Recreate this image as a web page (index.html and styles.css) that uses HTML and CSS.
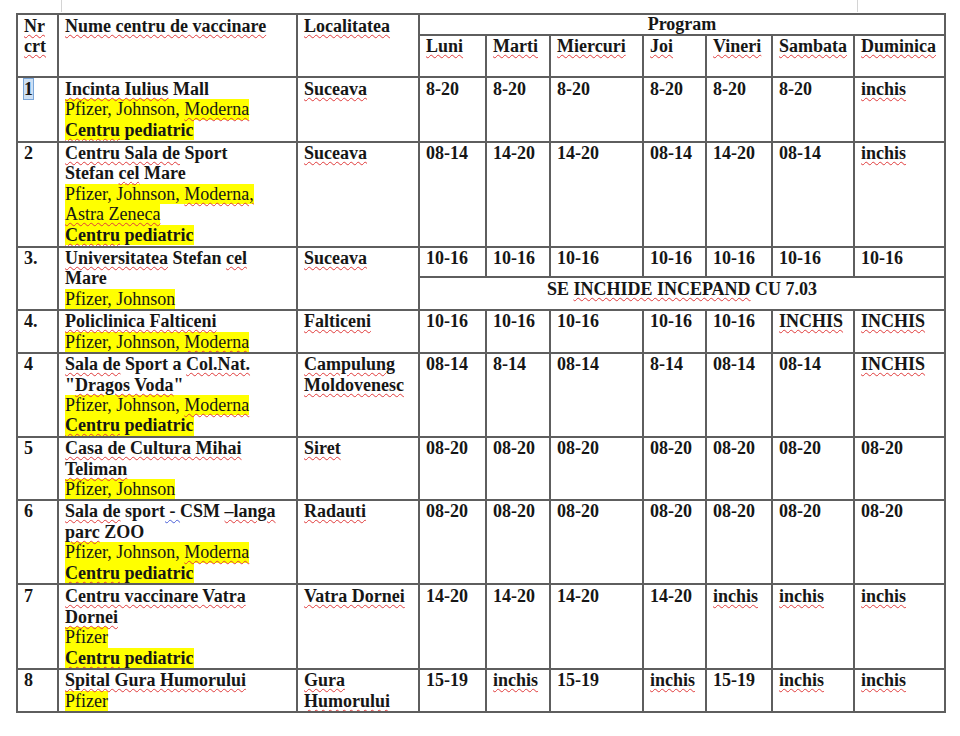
FILE: index.html
```html
<!DOCTYPE html>
<html lang="ro">
<head>
<meta charset="utf-8">
<title>Program centre de vaccinare</title>
<link rel="stylesheet" href="styles.css">
</head>
<body>
<div class="marks"><div class="mark l"></div><div class="mark r"></div></div>
<table class="sched">
  <colgroup>
    <col class="c-nr"><col class="c-name"><col class="c-loc">
    <col class="c-luni"><col class="c-marti"><col class="c-mie"><col class="c-joi"><col class="c-vin"><col class="c-sam"><col class="c-dum">
  </colgroup>
  <tr class="h1">
    <td rowspan="2" class="pt"><div><span class="sp">Nr</span></div><div><span class="sp">crt</span></div></td>
    <td rowspan="2" class="pt"><span class="sp">Nume centru de vaccinare</span></td>
    <td rowspan="2" class="pt"><span class="sp">Localitatea</span></td>
    <td colspan="7" class="center prog">Program</td>
  </tr>
  <tr class="h2">
    <td><span class="sp">Luni</span></td>
    <td><span class="sp">Marti</span></td>
    <td><span class="sp">Miercuri</span></td>
    <td><span class="sp">Joi</span></td>
    <td><span class="sp">Vineri</span></td>
    <td><span class="sp">Sambata</span></td>
    <td><span class="sp">Duminica</span></td>
  </tr>

  <tr class="r1">
    <td class="pt"><span class="sel">1</span></td>
    <td class="pt">
      <div class="ln"><span class="sp">Incinta Iulius</span> Mall</div>
      <div class="ln hl vac">Pfizer, Johnson, <span class="sp">Moderna</span></div>
      <div class="ln hl"><span class="sp">Centru</span> pediatric</div>
    </td>
    <td class="pt"><span class="sp">Suceava</span></td>
    <td class="pt">8-20</td><td class="pt">8-20</td><td class="pt">8-20</td><td class="pt">8-20</td><td class="pt">8-20</td><td class="pt">8-20</td>
    <td class="pt"><span class="sp">inchis</span></td>
  </tr>

  <tr class="r2">
    <td>2</td>
    <td>
      <div class="ln"><span class="sp">Centru Sala de</span> Sport</div>
      <div class="ln">Stefan <span class="sp">cel</span> Mare</div>
      <div class="ln hl vac">Pfizer, Johnson, <span class="sp">Moderna,</span></div>
      <div class="ln hl vac"><span class="sp">Astra Zeneca</span></div>
      <div class="ln hl"><span class="sp">Centru</span> pediatric</div>
    </td>
    <td><span class="sp">Suceava</span></td>
    <td>08-14</td><td>14-20</td><td>14-20</td><td>08-14</td><td>14-20</td><td>08-14</td>
    <td><span class="sp">inchis</span></td>
  </tr>

  <tr class="r3a">
    <td rowspan="2">3.</td>
    <td rowspan="2">
      <div class="ln"><span class="sp">Universitatea</span> Stefan <span class="sp">cel</span></div>
      <div class="ln">Mare</div>
      <div class="ln hl vac">Pfizer, Johnson</div>
    </td>
    <td rowspan="2"><span class="sp">Suceava</span></td>
    <td>10-16</td><td>10-16</td><td>10-16</td><td>10-16</td><td>10-16</td><td>10-16</td><td>10-16</td>
  </tr>
  <tr class="r3b">
    <td colspan="7" class="center pt">SE <span class="sp">INCHIDE INCEPAND</span> CU 7.03</td>
  </tr>

  <tr class="r4">
    <td>4.</td>
    <td>
      <div class="ln"><span class="sp">Policlinica Falticeni</span></div>
      <div class="ln hl vac">Pfizer, Johnson, <span class="sp">Moderna</span></div>
    </td>
    <td><span class="sp">Falticeni</span></td>
    <td>10-16</td><td>10-16</td><td>10-16</td><td>10-16</td><td>10-16</td>
    <td><span class="sp">INCHIS</span></td>
    <td><span class="sp">INCHIS</span></td>
  </tr>

  <tr class="r4b">
    <td>4</td>
    <td>
      <div class="ln"><span class="sp">Sala de</span> Sport a <span class="sp">Col.Nat.</span></div>
      <div class="ln">"<span class="sp">Dragos Voda</span>"</div>
      <div class="ln hl vac">Pfizer, Johnson, <span class="sp">Moderna</span></div>
      <div class="ln hl"><span class="sp">Centru</span> pediatric</div>
    </td>
    <td>
      <div class="ln"><span class="sp">Campulung</span></div>
      <div class="ln"><span class="sp">Moldovenesc</span></div>
    </td>
    <td>08-14</td><td>8-14</td><td>08-14</td><td>8-14</td><td>08-14</td><td>08-14</td>
    <td><span class="sp">INCHIS</span></td>
  </tr>

  <tr class="r5">
    <td>5</td>
    <td>
      <div class="ln"><span class="sp">Casa de Cultura Mihai</span></div>
      <div class="ln"><span class="sp">Teliman</span></div>
      <div class="ln hl vac">Pfizer, Johnson</div>
    </td>
    <td><span class="sp">Siret</span></td>
    <td>08-20</td><td>08-20</td><td>08-20</td><td>08-20</td><td>08-20</td><td>08-20</td><td>08-20</td>
  </tr>

  <tr class="r6">
    <td>6</td>
    <td>
      <div class="ln"><span class="sp">Sala de</span> sport<span class="gr"> - </span>CSM <span class="sp">–langa</span></div>
      <div class="ln"><span class="sp">parc</span> ZOO</div>
      <div class="ln hl vac">Pfizer, Johnson, <span class="sp">Moderna</span></div>
      <div class="ln hl"><span class="sp">Centru</span> pediatric</div>
    </td>
    <td><span class="sp">Radauti</span></td>
    <td>08-20</td><td>08-20</td><td>08-20</td><td>08-20</td><td>08-20</td><td>08-20</td><td>08-20</td>
  </tr>

  <tr class="r7">
    <td class="pt">7</td>
    <td class="pt">
      <div class="ln"><span class="sp">Centru vaccinare Vatra</span></div>
      <div class="ln"><span class="sp">Dornei</span></div>
      <div class="ln hl vac">Pfizer</div>
      <div class="ln hl"><span class="sp">Centru</span> pediatric</div>
    </td>
    <td class="pt"><span class="sp">Vatra Dornei</span></td>
    <td class="pt">14-20</td><td class="pt">14-20</td><td class="pt">14-20</td><td class="pt">14-20</td>
    <td class="pt"><span class="sp">inchis</span></td>
    <td class="pt"><span class="sp">inchis</span></td>
    <td class="pt"><span class="sp">inchis</span></td>
  </tr>

  <tr class="r8">
    <td>8</td>
    <td>
      <div class="ln"><span class="sp">Spital Gura Humorului</span></div>
      <div class="ln hl vac">Pfizer</div>
    </td>
    <td>
      <div class="ln"><span class="sp">Gura</span></div>
      <div class="ln"><span class="sp">Humorului</span></div>
    </td>
    <td>15-19</td>
    <td><span class="sp">inchis</span></td>
    <td>15-19</td>
    <td><span class="sp">inchis</span></td>
    <td>15-19</td>
    <td><span class="sp">inchis</span></td>
    <td><span class="sp">inchis</span></td>
  </tr>
</table>
</body>
</html>
```

FILE: styles.css
```css
html, body {
  margin: 0;
  padding: 0;
  background: #ffffff;
}

body {
  font-family: "Liberation Serif", "Times New Roman", serif;
  color: #161616;
}

.marks {
  display: flex;
  height: 13px;
}

.mark {
  width: 1px;
  height: 12px;
  background: #d4d4d4;
}

.mark.l { margin-left: 61px; }
.mark.r { margin-left: 795px; }

.sched {
  margin-left: 16px;
  width: 928px;
  table-layout: fixed;
  border-collapse: collapse;
  font-size: 18px;
  line-height: 20.4px;
  font-weight: 700;
}

.c-nr { width: 41px; }
.c-name { width: 239px; }
.c-loc { width: 122px; }
.c-luni { width: 67px; }
.c-marti { width: 64px; }
.c-mie { width: 93px; }
.c-joi { width: 63px; }
.c-vin { width: 66px; }
.c-sam { width: 82px; }
.c-dum { width: 91px; }

.sched td {
  border: 2px solid #5e5e5e;
  vertical-align: top;
  padding: 0 2px 0 6px;
  white-space: nowrap;
  overflow: hidden;
}

.sched td.pt {
  padding-top: 1px;
}

.sched td.center {
  text-align: center;
  padding-left: 0;
  padding-right: 0;
}

.sched td.prog {
  padding-top: 0;
  line-height: 19px;
}

.h1 { height: 21px; }
.h2 { height: 42px; }
.r1 { height: 65px; }
.r2 { height: 105px; }
.r3a { height: 30px; }
.r3b { height: 33px; }
.r4 { height: 43px; }
.r4b { height: 84px; }
.r5 { height: 63px; }
.r6 { height: 84px; }
.r7 { height: 85px; }
.r8 { height: 42px; }

.ln {
  height: 20.4px;
  width: fit-content;
}

.hl {
  background: #ffff00;
}

.vac {
  font-weight: 400;
}

.sp {
  text-decoration-line: underline;
  text-decoration-style: wavy;
  text-decoration-color: #e03b3b;
  text-decoration-thickness: 1px;
  text-underline-offset: 2px;
}

.gr {
  text-decoration-line: underline;
  text-decoration-style: wavy;
  text-decoration-color: #4a5fd8;
  text-decoration-thickness: 1px;
  text-underline-offset: 2px;
}

.sel {
  background: #cde0f4;
  outline: 1px solid #7aa5d8;
}
```
